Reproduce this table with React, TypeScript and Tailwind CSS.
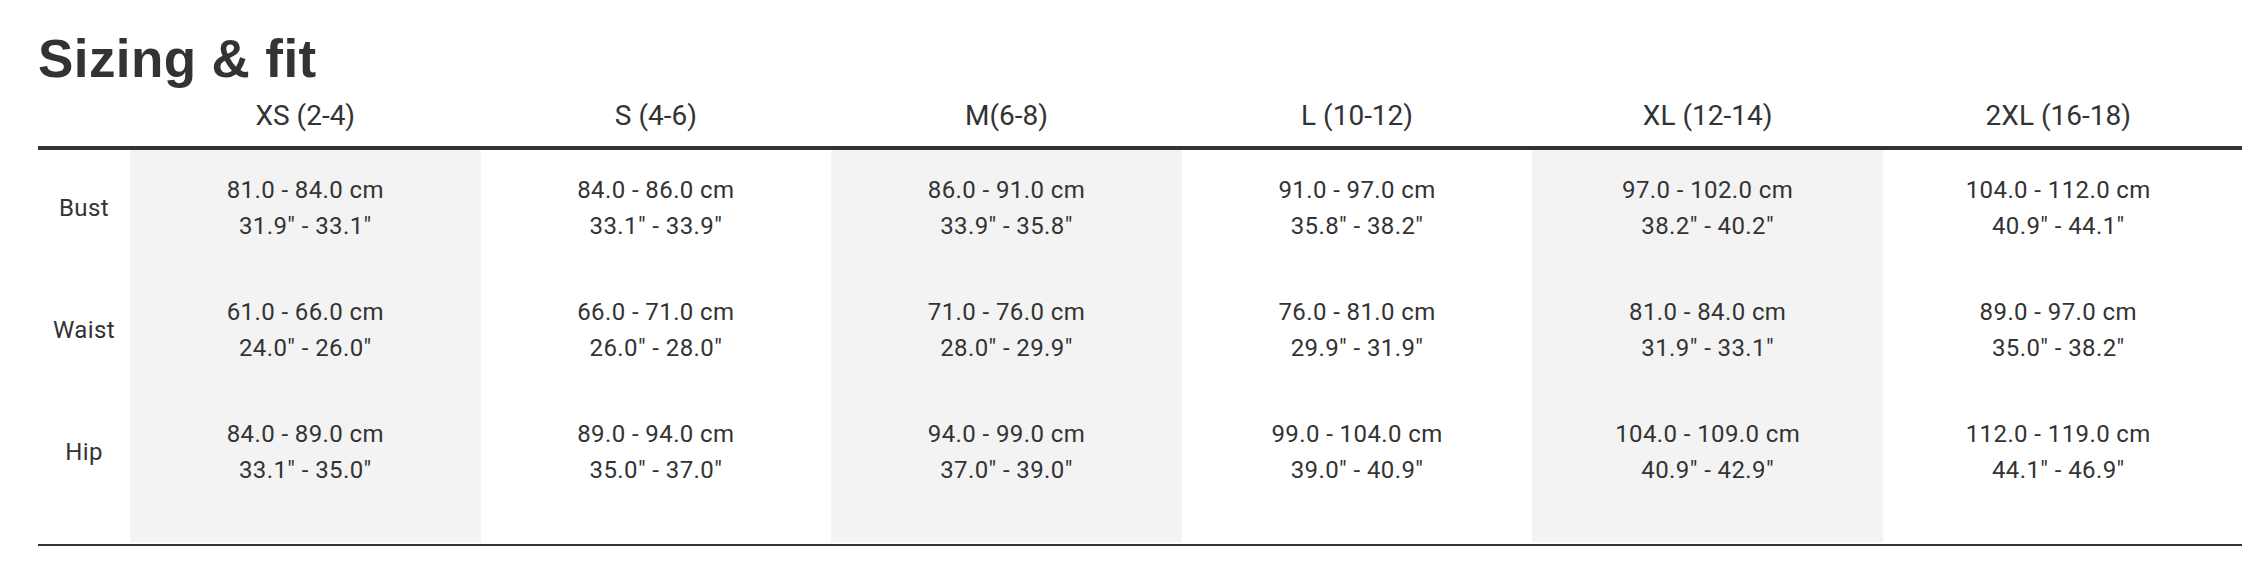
import React from "react";

type Row = { label: string; values: [string, string][] };

const sizes = ["XS (2-4)", "S (4-6)", "M(6-8)", "L (10-12)", "XL (12-14)", "2XL (16-18)"];

const rows: Row[] = [
  {
    label: "Bust",
    values: [
      ["81.0 - 84.0 cm", '31.9" - 33.1"'],
      ["84.0 - 86.0 cm", '33.1" - 33.9"'],
      ["86.0 - 91.0 cm", '33.9" - 35.8"'],
      ["91.0 - 97.0 cm", '35.8" - 38.2"'],
      ["97.0 - 102.0 cm", '38.2" - 40.2"'],
      ["104.0 - 112.0 cm", '40.9" - 44.1"'],
    ],
  },
  {
    label: "Waist",
    values: [
      ["61.0 - 66.0 cm", '24.0" - 26.0"'],
      ["66.0 - 71.0 cm", '26.0" - 28.0"'],
      ["71.0 - 76.0 cm", '28.0" - 29.9"'],
      ["76.0 - 81.0 cm", '29.9" - 31.9"'],
      ["81.0 - 84.0 cm", '31.9" - 33.1"'],
      ["89.0 - 97.0 cm", '35.0" - 38.2"'],
    ],
  },
  {
    label: "Hip",
    values: [
      ["84.0 - 89.0 cm", '33.1" - 35.0"'],
      ["89.0 - 94.0 cm", '35.0" - 37.0"'],
      ["94.0 - 99.0 cm", '37.0" - 39.0"'],
      ["99.0 - 104.0 cm", '39.0" - 40.9"'],
      ["104.0 - 109.0 cm", '40.9" - 42.9"'],
      ["112.0 - 119.0 cm", '44.1" - 46.9"'],
    ],
  },
];

// padding per row so the shaded columns run unbroken top to bottom
const rowPad = ["pt-[22px] pb-[25px]", "py-[25px]", "pt-[25px] pb-[54px]"];

const App: React.FC = () => {
  return (
    <div className="min-h-screen bg-white pl-[38px] pt-[33px] text-[#333] font-['Roboto',sans-serif]">
      <h2 className="text-[53px] leading-[52px] font-bold tracking-[0.4px] font-['Liberation_Sans',Arial,sans-serif]">
        Sizing &amp; fit
      </h2>

      {/* header */}
      <div className="mt-[13px] border-b-4 border-[#333] pb-[12px]">
        <div className="grid grid-cols-[92px_repeat(6,350.6px)]">
          <div></div>
          {sizes.map((s) => (
            <div key={s} className="text-center text-[28px] leading-[36px]">
              {s}
            </div>
          ))}
        </div>
      </div>

      {/* body */}
      <div className="grid grid-cols-[92px_repeat(6,350.6px)] text-[24px] leading-[36px] tracking-[0.4px]">
        {rows.map((row, ri) => (
          <React.Fragment key={row.label}>
            <div className={`flex items-center justify-center ${rowPad[ri]}`}>{row.label}</div>
            {row.values.map(([cm, inch], ci) => (
              <div
                key={ci}
                className={`flex flex-col items-center ${rowPad[ri]} ${ci % 2 === 0 ? "bg-[#f3f3f3]" : ""}`}
              >
                <span>{cm}</span>
                <span>{inch}</span>
              </div>
            ))}
          </React.Fragment>
        ))}
      </div>
      <div className="mt-[2px] h-[2px] bg-[#333]"></div>
    </div>
  );
};

export default App;
